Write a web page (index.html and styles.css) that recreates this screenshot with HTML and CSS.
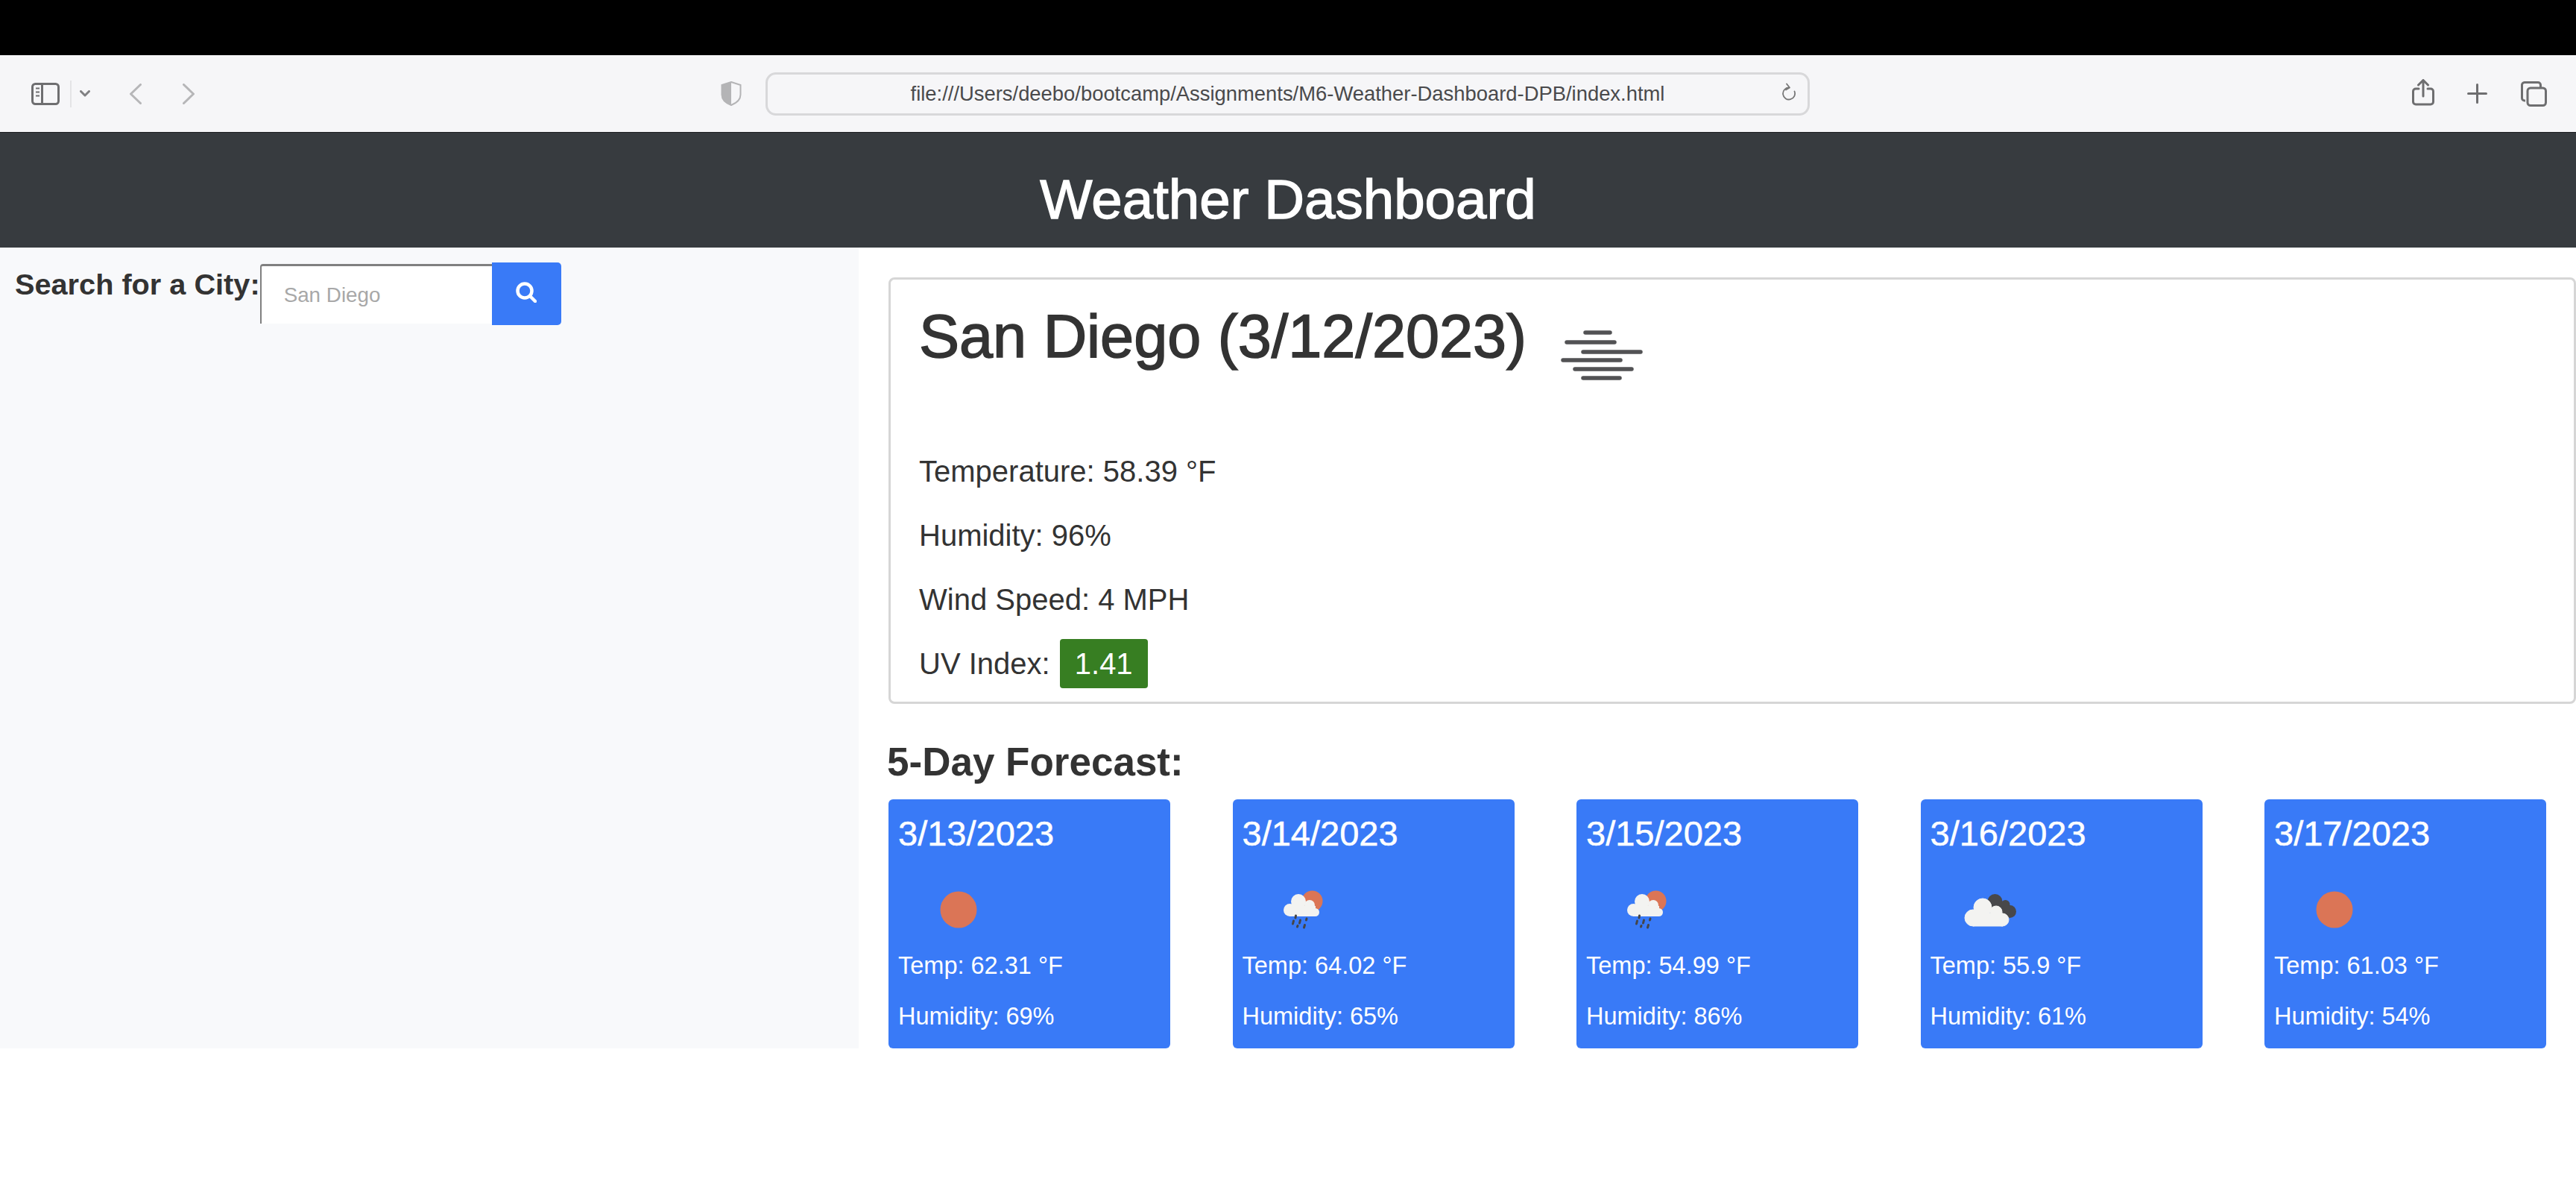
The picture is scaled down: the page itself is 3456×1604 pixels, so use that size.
FILE: index.html
```html
<!DOCTYPE html>
<html lang="en">
<head>
    <meta charset="UTF-8">
    <title>Weather Dashboard</title>
    <link rel="stylesheet" href="styles.css">
</head>
<body>
    <div class="topbar"></div>
    <div class="toolbar">
        <div class="tools-left">
            <svg class="ic-sidebar" viewBox="0 0 38 30" fill="none" stroke="#6e6e70" stroke-width="3">
                <rect x="1.5" y="1.5" width="35" height="27" rx="4"/>
                <path d="M14.5 1.5v27"/>
                <path d="M6 7.5h5M6 12.5h5M6 17.5h5" stroke-width="2"/>
            </svg>
            <span class="tool-divider"></span>
            <svg class="ic-chevron" viewBox="0 0 14 9" fill="none" stroke="#808082" stroke-width="3" stroke-linecap="round" stroke-linejoin="round">
                <path d="M1.5 1.5L7 7l5.5-5.5"/>
            </svg>
            <svg class="ic-back" viewBox="0 0 16 28" fill="none" stroke="#b6b6b8" stroke-width="3" stroke-linecap="round" stroke-linejoin="round">
                <path d="M14.5 1.5L1.5 14l13 12.5"/>
            </svg>
            <svg class="ic-forward" viewBox="0 0 16 28" fill="none" stroke="#b6b6b8" stroke-width="3" stroke-linecap="round" stroke-linejoin="round">
                <path d="M1.5 1.5L14.5 14l-13 12.5"/>
            </svg>
        </div>
        <svg class="ic-shield" viewBox="0 0 28 33">
            <path d="M14 1L26.5 5v13c0 6-5 11-12.500 14C6 29 1.500 24 1.500 18V5z" fill="#f6f6f8" stroke="#b4b4b6" stroke-width="2"/>
            <path d="M14 1L1.500 5v13c0 6 4.500 11 12.500 14z" fill="#b4b4b6"/>
        </svg>
        <div class="urlbar">
            <span class="url-text">file:///Users/deebo/bootcamp/Assignments/M6-Weather-Dashboard-DPB/index.html</span>
            <svg class="ic-reload" viewBox="0 0 18 25" fill="none" stroke="#777" stroke-width="1.800" stroke-linecap="round" stroke-linejoin="round">
                <path d="M9 6.500a8 8 0 1 0 7.500 5"/>
                <path d="M6 1.500l4 5-5 3"/>
            </svg>
        </div>
        <div class="tools-right">
            <svg class="ic-share" viewBox="0 0 30 36" fill="none" stroke="#6e6e70" stroke-width="3" stroke-linecap="round" stroke-linejoin="round">
                <path d="M9 13H5a3.500 3.500 0 0 0-3.500 3.500v14A3.500 3.500 0 0 0 5 34h20a3.500 3.500 0 0 0 3.500-3.500v-14A3.500 3.500 0 0 0 25 13h-4"/>
                <path d="M15 23V2M8.500 8L15 1.500 21.500 8"/>
            </svg>
            <svg class="ic-plus" viewBox="0 0 27 27" fill="none" stroke="#6e6e70" stroke-width="3" stroke-linecap="round">
                <path d="M13.500 1.500v24M1.500 13.500h24"/>
            </svg>
            <svg class="ic-tabs" viewBox="0 0 35 34" fill="none" stroke="#6e6e70" stroke-width="3" stroke-linejoin="round">
                <path d="M6 26H5a3.500 3.500 0 0 1-3.500-3.500v-17A3.500 3.500 0 0 1 5 1.500h18A3.500 3.500 0 0 1 26.500 5v3"/>
                <rect x="9" y="9" width="24.500" height="23.500" rx="4"/>
            </svg>
        </div>
    </div>

    <header class="page-header">
        <h1>Weather Dashboard</h1>
    </header>

    <div class="content">
        <aside class="sidebar">
            <form class="search-form">
                <label for="city">Search for a City:</label>
                <input type="text" id="city" placeholder="San Diego">
                <button type="button" class="search-btn" aria-label="Search">
                    <svg viewBox="0 0 28 28" fill="none" stroke="#fff" stroke-width="4.500" stroke-linecap="round">
                        <circle cx="12" cy="12" r="9.500"/>
                        <path d="M19 19l7 7"/>
                    </svg>
                </button>
            </form>
        </aside>

        <main class="main">
            <section class="current">
                <div class="current-title">
                    <h2>San Diego (3/12/2023)</h2>
                    <svg class="ic-fog" viewBox="0 0 112 72" fill="none" stroke="#525254" stroke-width="5.500" stroke-linecap="round">
                        <path d="M33 3h33M8 16h64M30 29h77M3 40h77M19 52h76M30 64h49"/>
                    </svg>
                </div>
                <p>Temperature: 58.39 °F</p>
                <p>Humidity: 96%</p>
                <p>Wind Speed: 4 MPH</p>
                <p class="uv-row">UV Index: <span class="uv-badge">1.41</span></p>
            </section>

            <h3 class="forecast-title">5-Day Forecast:</h3>
            <div class="forecast">
                <div class="day-card">
                    <h4>3/13/2023</h4>
                    <svg class="day-icon" viewBox="0 0 160 90"><circle cx="81" cy="50" r="24.500" fill="#db7556"/></svg>
                    <p>Temp: 62.31 °F</p>
                    <p>Humidity: 69%</p>
                </div>
                <div class="day-card">
                    <h4>3/14/2023</h4>
                    <svg class="day-icon" viewBox="0 0 160 90">
                        <use href="#rain-icon"/>
                    </svg>
                    <p>Temp: 64.02 °F</p>
                    <p>Humidity: 65%</p>
                </div>
                <div class="day-card">
                    <h4>3/15/2023</h4>
                    <svg class="day-icon" viewBox="0 0 160 90">
                        <use href="#rain-icon"/>
                    </svg>
                    <p>Temp: 54.99 °F</p>
                    <p>Humidity: 86%</p>
                </div>
                <div class="day-card">
                    <h4>3/16/2023</h4>
                    <svg class="day-icon" viewBox="0 0 160 90">
                        <g fill="#48484a">
                            <circle cx="86.500" cy="39" r="10"/>
                            <circle cx="100.500" cy="43" r="6"/>
                            <circle cx="106.500" cy="52.500" r="8.500"/>
                            <path d="M80 40h24v21H80z"/>
                        </g>
                        <g fill="#f3f3f1" stroke="#f3f3f1">
                            <circle cx="70" cy="47" r="12"/>
                            <circle cx="57" cy="61" r="11"/>
                            <circle cx="88" cy="53" r="8"/>
                            <circle cx="96.500" cy="63.500" r="8.500"/>
                            <path d="M57 55h40v17H57z"/>
                        </g>
                    </svg>
                    <p>Temp: 55.9 °F</p>
                    <p>Humidity: 61%</p>
                </div>
                <div class="day-card">
                    <h4>3/17/2023</h4>
                    <svg class="day-icon" viewBox="0 0 160 90"><circle cx="81" cy="50" r="24.500" fill="#db7556"/></svg>
                    <p>Temp: 61.03 °F</p>
                    <p>Humidity: 54%</p>
                </div>
            </div>
        </main>
    </div>

    <!-- shared shape for the two rainy days -->
    <svg class="defs" width="0" height="0">
        <defs>
            <g id="rain-icon">
                <circle cx="93.500" cy="38.500" r="14" fill="#db7556"/>
                <g fill="#f3f3f1">
                    <circle cx="75" cy="39" r="10"/>
                    <circle cx="63.500" cy="50.500" r="8.500"/>
                    <circle cx="90" cy="44" r="7"/>
                    <circle cx="97.500" cy="53.500" r="5.500"/>
                    <path d="M63 45h35v14H63z"/>
                </g>
                <path d="M71.500 58l-.5 3M68.500 65l-1 4M77.500 64l-1 4M86 62l-.5 2M74 71.500l-.5 1.500M83.500 70.500l-1 3.500" fill="none" stroke="#454547" stroke-width="3" stroke-linecap="round"/>
            </g>
        </defs>
    </svg>
</body>
</html>
```
FILE: styles.css
```css
body {
    margin: 0;
    background-color: #fff;
    color: #333;
    font-family: "Liberation Sans", Arial, sans-serif;
    overflow: hidden;
}
svg {
    display: block;
    flex: none;
}
.defs {
    position: absolute;
}

/* browser chrome */
.topbar {
    height: 74px;
    background-color: #000;
}
.toolbar {
    height: 103px;
    background-color: #f6f6f8;
    border-bottom: 1px solid #1d1f21;
    display: flex;
    align-items: center;
}
.tools-left {
    width: 967px;
    display: flex;
    align-items: center;
}
.ic-sidebar {
    width: 38px;
    height: 30px;
    margin-left: 42px;
}
.tool-divider {
    width: 2px;
    height: 36px;
    margin-left: 14px;
    background-color: #e4e4e6;
}
.ic-chevron {
    width: 14px;
    height: 9px;
    margin-left: 11px;
}
.ic-back {
    width: 16px;
    height: 28px;
    margin-left: 53px;
}
.ic-forward {
    width: 16px;
    height: 28px;
    margin-left: 55px;
}
.ic-shield {
    width: 28px;
    height: 33px;
}
.urlbar {
    width: 1395px;
    height: 52px;
    margin-left: 32px;
    border: 3px solid #d8d8da;
    border-radius: 14px;
    display: flex;
    align-items: center;
    justify-content: center;
    position: relative;
}
.url-text {
    font-size: 27.4px;
    color: #4a4a4c;
    white-space: nowrap;
}
.ic-reload {
    position: absolute;
    right: 16px;
    top: 11px;
    width: 18px;
    height: 25px;
}
.tools-right {
    display: flex;
    align-items: center;
    margin-left: 3px;
}
.ic-share {
    width: 30px;
    height: 36px;
    margin-left: 805px;
    margin-top: -3px;
}
.ic-plus {
    width: 27px;
    height: 27px;
    margin-left: 44px;
}
.ic-tabs {
    width: 35px;
    height: 34px;
    margin-left: 45px;
}

/* page */
.page-header {
    height: 154px;
    box-sizing: border-box;
    padding-top: 24px;
    background-color: #373b3f;
    color: #fff;
    display: flex;
    align-items: center;
    justify-content: center;
}
.page-header h1 {
    margin: 0;
    font-size: 74.5px;
    font-weight: 400;
    -webkit-text-stroke: 1.4px #fff;
}
.content {
    display: flex;
    height: 1074px;
}
.sidebar {
    width: 1152px;
    flex: none;
    box-sizing: border-box;
    padding: 20px 0 0 20px;
    background-color: #f8f9fb;
}
.search-form {
    display: flex;
    align-items: flex-start;
}
.search-form label {
    font-size: 39.7px;
    font-weight: 700;
    line-height: 56px;
    margin-top: 1px;
}
.search-form input {
    width: 311px;
    height: 80px;
    margin-top: 2px;
    box-sizing: border-box;
    padding: 0 0 0 30px;
    border: 0;
    border-top: 3px solid #808080;
    border-left: 2px solid #808080;
    border-radius: 4px 0 0 0;
    background-color: #fff;
    font-family: inherit;
    font-size: 27.8px;
}
.search-form input::placeholder {
    color: #a8a8a8;
}
.search-btn {
    width: 93px;
    height: 84px;
    padding: 0;
    border: 0;
    border-radius: 0 5px 5px 0;
    background-color: #397af7;
    display: flex;
    justify-content: center;
    padding-top: 26px;
    box-sizing: border-box;
}
.search-btn svg {
    width: 28px;
    height: 28px;
}
.main {
    flex: 1;
    padding: 40px 0 0 40px;
    min-width: 0;
}
.current {
    height: 572px;
    box-sizing: border-box;
    padding: 0 38px;
    border: 3px solid #d6d6d6;
    border-radius: 8px;
}
.current-title {
    display: flex;
    align-items: flex-start;
    height: 227px;
}
.current h2 {
    margin: 28px 0 0;
    font-size: 81px;
    line-height: 96px;
    font-weight: 400;
    -webkit-text-stroke: 1.6px #333;
}
.ic-fog {
    width: 112px;
    height: 72px;
    margin: 68px 0 0 46px;
}
.current p {
    margin: 0 0 26px;
    font-size: 40px;
    line-height: 60px;
}
.uv-badge {
    display: inline-block;
    margin: -3px 0 -3px 2px;
    padding: 0 20px;
    height: 66px;
    line-height: 66px;
    border-radius: 4px;
    background-color: #377e22;
    color: #fff;
}
.forecast-title {
    margin: 48px 0 20px -2px;
    font-size: 53px;
    line-height: 60px;
    font-weight: 700;
}
.forecast {
    display: flex;
    gap: 83.5px;
    width: 2224px;
}
.day-card {
    width: 378px;
    height: 334px;
    flex: none;
    box-sizing: border-box;
    padding: 16px 13px 0;
    border-radius: 6px;
    background-color: #397af7;
    color: #fff;
}
.day-card h4 {
    margin: 0;
    font-size: 47px;
    line-height: 60px;
    font-weight: 400;
    -webkit-text-stroke: 0.5px #fff;
}
.day-icon {
    width: 160px;
    height: 90px;
    margin: 22px 0 13px;
}
.day-card p {
    margin: 0 0 24px;
    font-size: 32.5px;
    line-height: 44px;
}
```
